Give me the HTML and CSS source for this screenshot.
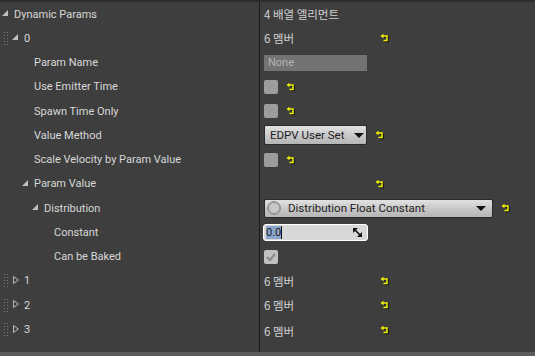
FILE: index.html
```html
<!DOCTYPE html>
<html lang="en">
<head>
    <meta charset="UTF-8">
    <title>Dynamic Params</title>
    <link rel="stylesheet" href="styles.css">
</head>
<body>
    <div class="panel">
        <div class="rows">
            <div class="row">
                <div class="name lvl-0">
                    <svg class="tri" width="6" height="6" viewBox="0 0 6 6"><polygon points="6,0 6,6 0,6"/></svg>
                    <span>Dynamic Params</span>
                </div>
                <div class="value"><span class="kr">4 배열 엘리먼트</span></div>
            </div>

            <div class="row">
                <div class="name lvl-item">
                    <svg class="handle" width="4" height="13" viewBox="0 0 4 13"><g fill="#7a7a7a"><rect x="0" y="0" width="1" height="1"/><rect x="0" y="3" width="1" height="1"/><rect x="0" y="6" width="1" height="1"/><rect x="0" y="9" width="1" height="1"/><rect x="0" y="12" width="1" height="1"/><rect x="3" y="0" width="1" height="1"/><rect x="3" y="3" width="1" height="1"/><rect x="3" y="6" width="1" height="1"/><rect x="3" y="9" width="1" height="1"/><rect x="3" y="12" width="1" height="1"/></g></svg>
                    <svg class="tri" width="6" height="6" viewBox="0 0 6 6"><polygon points="6,0 6,6 0,6"/></svg>
                    <span>0</span>
                </div>
                <div class="value"><span class="kr count">6 멤버</span><svg class="reset" width="9" height="8" viewBox="0 0 9 8"><path d="M3 2H7V6.5H3.5" fill="none" stroke="#111" stroke-width="1.5" transform="translate(1 1)"/><path d="M3 2H7V6.5H3.5" fill="none" stroke="#f2f200" stroke-width="1.5"/><polygon points="0.5,2 3.5,-0.3 3.5,4.3" fill="#f2f200"/></svg></div>
            </div>

            <div class="row">
                <div class="name lvl-2"><span>Param Name</span></div>
                <div class="value"><div class="text-box">None</div></div>
            </div>

            <div class="row">
                <div class="name lvl-2"><span>Use Emitter Time</span></div>
                <div class="value"><span class="check"></span><svg class="reset" width="9" height="8" viewBox="0 0 9 8"><path d="M3 2H7V6.5H3.5" fill="none" stroke="#111" stroke-width="1.5" transform="translate(1 1)"/><path d="M3 2H7V6.5H3.5" fill="none" stroke="#f2f200" stroke-width="1.5"/><polygon points="0.5,2 3.5,-0.3 3.5,4.3" fill="#f2f200"/></svg></div>
            </div>

            <div class="row">
                <div class="name lvl-2"><span>Spawn Time Only</span></div>
                <div class="value"><span class="check"></span><svg class="reset" width="9" height="8" viewBox="0 0 9 8"><path d="M3 2H7V6.5H3.5" fill="none" stroke="#111" stroke-width="1.5" transform="translate(1 1)"/><path d="M3 2H7V6.5H3.5" fill="none" stroke="#f2f200" stroke-width="1.5"/><polygon points="0.5,2 3.5,-0.3 3.5,4.3" fill="#f2f200"/></svg></div>
            </div>

            <div class="row">
                <div class="name lvl-2"><span>Value Method</span></div>
                <div class="value">
                    <div class="combo combo-small"><span>EDPV User Set</span><span class="arrow"></span></div>
                    <svg class="reset" width="9" height="8" viewBox="0 0 9 8"><path d="M3 2H7V6.5H3.5" fill="none" stroke="#111" stroke-width="1.5" transform="translate(1 1)"/><path d="M3 2H7V6.5H3.5" fill="none" stroke="#f2f200" stroke-width="1.5"/><polygon points="0.5,2 3.5,-0.3 3.5,4.3" fill="#f2f200"/></svg>
                </div>
            </div>

            <div class="row">
                <div class="name lvl-2"><span>Scale Velocity by Param Value</span></div>
                <div class="value"><span class="check"></span><svg class="reset" width="9" height="8" viewBox="0 0 9 8"><path d="M3 2H7V6.5H3.5" fill="none" stroke="#111" stroke-width="1.5" transform="translate(1 1)"/><path d="M3 2H7V6.5H3.5" fill="none" stroke="#f2f200" stroke-width="1.5"/><polygon points="0.5,2 3.5,-0.3 3.5,4.3" fill="#f2f200"/></svg></div>
            </div>

            <div class="row">
                <div class="name lvl-2 has-tri">
                    <svg class="tri" width="6" height="6" viewBox="0 0 6 6"><polygon points="6,0 6,6 0,6"/></svg>
                    <span>Param Value</span>
                </div>
                <div class="value"><span class="spacer"></span><svg class="reset" width="9" height="8" viewBox="0 0 9 8"><path d="M3 2H7V6.5H3.5" fill="none" stroke="#111" stroke-width="1.5" transform="translate(1 1)"/><path d="M3 2H7V6.5H3.5" fill="none" stroke="#f2f200" stroke-width="1.5"/><polygon points="0.5,2 3.5,-0.3 3.5,4.3" fill="#f2f200"/></svg></div>
            </div>

            <div class="row">
                <div class="name lvl-3 has-tri">
                    <svg class="tri" width="6" height="6" viewBox="0 0 6 6"><polygon points="6,0 6,6 0,6"/></svg>
                    <span>Distribution</span>
                </div>
                <div class="value">
                    <div class="combo combo-wide">
                        <span class="ball"></span>
                        <span class="combo-label">Distribution Float Constant</span>
                        <span class="arrow"></span>
                    </div>
                    <svg class="reset reset-wide" width="9" height="8" viewBox="0 0 9 8"><path d="M3 2H7V6.5H3.5" fill="none" stroke="#111" stroke-width="1.5" transform="translate(1 1)"/><path d="M3 2H7V6.5H3.5" fill="none" stroke="#f2f200" stroke-width="1.5"/><polygon points="0.5,2 3.5,-0.3 3.5,4.3" fill="#f2f200"/></svg>
                </div>
            </div>

            <div class="row">
                <div class="name lvl-4"><span>Constant</span></div>
                <div class="value">
                    <div class="num-box">
                        <span class="sel">0.0</span><span class="caret"></span>
                        <svg class="drag" width="9" height="9" viewBox="0 0 9 9"><polygon points="0,0 5,0 0,5" fill="#111"/><polygon points="9,9 4,9 9,4" fill="#111"/><line x1="1.5" y1="1.5" x2="7.5" y2="7.5" stroke="#111" stroke-width="1.6"/></svg>
                    </div>
                </div>
            </div>

            <div class="row">
                <div class="name lvl-4"><span>Can be Baked</span></div>
                <div class="value">
                    <span class="check checked">
                        <svg width="12" height="10" viewBox="0 0 12 10"><polyline points="2,5 5,8 10,2" fill="none" stroke="#8a8a8a" stroke-width="2.2"/></svg>
                    </span>
                </div>
            </div>

            <div class="row">
                <div class="name lvl-item">
                    <svg class="handle" width="4" height="13" viewBox="0 0 4 13"><g fill="#7a7a7a"><rect x="0" y="0" width="1" height="1"/><rect x="0" y="3" width="1" height="1"/><rect x="0" y="6" width="1" height="1"/><rect x="0" y="9" width="1" height="1"/><rect x="0" y="12" width="1" height="1"/><rect x="3" y="0" width="1" height="1"/><rect x="3" y="3" width="1" height="1"/><rect x="3" y="6" width="1" height="1"/><rect x="3" y="9" width="1" height="1"/><rect x="3" y="12" width="1" height="1"/></g></svg>
                    <svg class="tri-open" width="6" height="8" viewBox="0 0 6 8"><polygon points="0.5,0.5 5.3,4 0.5,7.5" fill="none" stroke="#bdbdbd" stroke-width="1"/></svg>
                    <span>1</span>
                </div>
                <div class="value"><span class="kr count">6 멤버</span><svg class="reset" width="9" height="8" viewBox="0 0 9 8"><path d="M3 2H7V6.5H3.5" fill="none" stroke="#111" stroke-width="1.5" transform="translate(1 1)"/><path d="M3 2H7V6.5H3.5" fill="none" stroke="#f2f200" stroke-width="1.5"/><polygon points="0.5,2 3.5,-0.3 3.5,4.3" fill="#f2f200"/></svg></div>
            </div>

            <div class="row">
                <div class="name lvl-item">
                    <svg class="handle" width="4" height="13" viewBox="0 0 4 13"><g fill="#7a7a7a"><rect x="0" y="0" width="1" height="1"/><rect x="0" y="3" width="1" height="1"/><rect x="0" y="6" width="1" height="1"/><rect x="0" y="9" width="1" height="1"/><rect x="0" y="12" width="1" height="1"/><rect x="3" y="0" width="1" height="1"/><rect x="3" y="3" width="1" height="1"/><rect x="3" y="6" width="1" height="1"/><rect x="3" y="9" width="1" height="1"/><rect x="3" y="12" width="1" height="1"/></g></svg>
                    <svg class="tri-open" width="6" height="8" viewBox="0 0 6 8"><polygon points="0.5,0.5 5.3,4 0.5,7.5" fill="none" stroke="#bdbdbd" stroke-width="1"/></svg>
                    <span>2</span>
                </div>
                <div class="value"><span class="kr count">6 멤버</span><svg class="reset" width="9" height="8" viewBox="0 0 9 8"><path d="M3 2H7V6.5H3.5" fill="none" stroke="#111" stroke-width="1.5" transform="translate(1 1)"/><path d="M3 2H7V6.5H3.5" fill="none" stroke="#f2f200" stroke-width="1.5"/><polygon points="0.5,2 3.5,-0.3 3.5,4.3" fill="#f2f200"/></svg></div>
            </div>

            <div class="row">
                <div class="name lvl-item">
                    <svg class="handle" width="4" height="13" viewBox="0 0 4 13"><g fill="#7a7a7a"><rect x="0" y="0" width="1" height="1"/><rect x="0" y="3" width="1" height="1"/><rect x="0" y="6" width="1" height="1"/><rect x="0" y="9" width="1" height="1"/><rect x="0" y="12" width="1" height="1"/><rect x="3" y="0" width="1" height="1"/><rect x="3" y="3" width="1" height="1"/><rect x="3" y="6" width="1" height="1"/><rect x="3" y="9" width="1" height="1"/><rect x="3" y="12" width="1" height="1"/></g></svg>
                    <svg class="tri-open" width="6" height="8" viewBox="0 0 6 8"><polygon points="0.5,0.5 5.3,4 0.5,7.5" fill="none" stroke="#bdbdbd" stroke-width="1"/></svg>
                    <span>3</span>
                </div>
                <div class="value"><span class="kr count">6 멤버</span><svg class="reset" width="9" height="8" viewBox="0 0 9 8"><path d="M3 2H7V6.5H3.5" fill="none" stroke="#111" stroke-width="1.5" transform="translate(1 1)"/><path d="M3 2H7V6.5H3.5" fill="none" stroke="#f2f200" stroke-width="1.5"/><polygon points="0.5,2 3.5,-0.3 3.5,4.3" fill="#f2f200"/></svg></div>
            </div>
        </div>
        <div class="footer"></div>
    </div>
</body>
</html>
```

FILE: styles.css
```css
* {
    box-sizing: border-box;
}

body {
    margin: 0;
    background-color: #3e3e3e;
    font-family: Roboto, "Noto Sans CJK KR", sans-serif;
    font-size: 11px;
    color: #d8d8d8;
}

.panel {
    width: 535px;
    height: 356px;
    display: flex;
    flex-direction: column;
    border-top: 2px solid #2c2c2c;
}

.rows {
    flex: 1;
    display: flex;
    flex-direction: column;
}

.row {
    display: flex;
    height: 24.25px;
}

.row:last-child {
    flex: 1;
}

.row:last-child .name,
.row:last-child .value {
    align-items: flex-start;
    padding-top: 6px;
}

.name {
    width: 260px;
    flex-shrink: 0;
    display: flex;
    align-items: center;
    border-right: 1px solid #1b1b1b;
    white-space: nowrap;
}

.value {
    flex: 1;
    display: flex;
    align-items: center;
    padding-left: 4px;
}

.row:last-child .value .reset {
    margin-top: 3px;
}

/* indent levels */
.lvl-0 {
    padding-left: 2px;
}

.lvl-item {
    padding-left: 4px;
}

.lvl-2 {
    padding-left: 34px;
}

.lvl-2.has-tri {
    padding-left: 22px;
}

.lvl-3.has-tri {
    padding-left: 32px;
}

.lvl-4 {
    padding-left: 54px;
}

.tri {
    fill: #bfbfbf;
    margin-right: 6px;
    margin-top: -2px;
}

.handle {
    margin-right: 4px;
}

.tri-open {
    margin-left: 1px;
    margin-right: 5px;
    margin-top: -2px;
}

.row:last-child .tri-open {
    margin-top: 2px;
}

.kr {
    font-family: "Noto Sans CJK KR", Roboto, sans-serif;
    font-size: 11.5px;
    color: #d0d0d0;
}

.count {
    width: 117px;
}

.spacer {
    width: 112px;
}

/* reset-to-default arrow */
.reset {
    margin-left: 8px;
    overflow: visible;
    flex-shrink: 0;
}

.count + .reset,
.spacer + .reset {
    margin-left: -1px;
}

.text-box {
    width: 103px;
    height: 16px;
    background-color: #737373;
    color: #b4b4b4;
    padding-left: 4px;
    line-height: 16px;
}

.check {
    width: 14px;
    height: 14px;
    border-radius: 2px;
    background-color: #9c9c9c;
    display: inline-flex;
    align-items: center;
    justify-content: center;
}

.check.checked {
    background-color: #c0c0c0;
}

.combo {
    display: flex;
    align-items: center;
    background: linear-gradient(#e2e2e2, #c4c4c4 60%, #b6b6b6);
    border: 1px solid #2a2a2a;
    border-radius: 2px;
    color: #1c1c1c;
    font-size: 11.5px;
    padding-left: 5px;
}

.combo-small {
    width: 103px;
    height: 20px;
}

.combo-small .arrow {
    margin-left: 10px;
}

.combo-wide {
    width: 229px;
    height: 19px;
    padding-left: 2px;
}

.combo-label {
    flex: 1;
}

.combo-wide .arrow {
    margin-right: 6px;
}

.arrow {
    width: 0;
    height: 0;
    border-left: 5px solid transparent;
    border-right: 5px solid transparent;
    border-top: 5px solid #111;
}

.ball {
    width: 14px;
    height: 14px;
    border-radius: 50%;
    background: radial-gradient(circle, #c8c8c8 50%, #9a9a9a 65%, #e6e6e6 80%);
    border: 1px solid #8c8c8c;
    margin-right: 7px;
}

.num-box {
    width: 105px;
    height: 17px;
    margin-left: -1px;
    border: 1px solid #ffffff;
    border-radius: 3px;
    background-color: #d8d8d8;
    display: flex;
    align-items: center;
    padding-left: 2px;
    color: #1a1a1a;
}

.sel {
    background-color: #8aa6cc;
    line-height: 13px;
}

.caret {
    width: 1px;
    height: 13px;
    background-color: #111;
}

.drag {
    margin-left: auto;
    margin-right: 5px;
}

.footer {
    height: 4px;
    background-color: #5b5b5b;
}
```
